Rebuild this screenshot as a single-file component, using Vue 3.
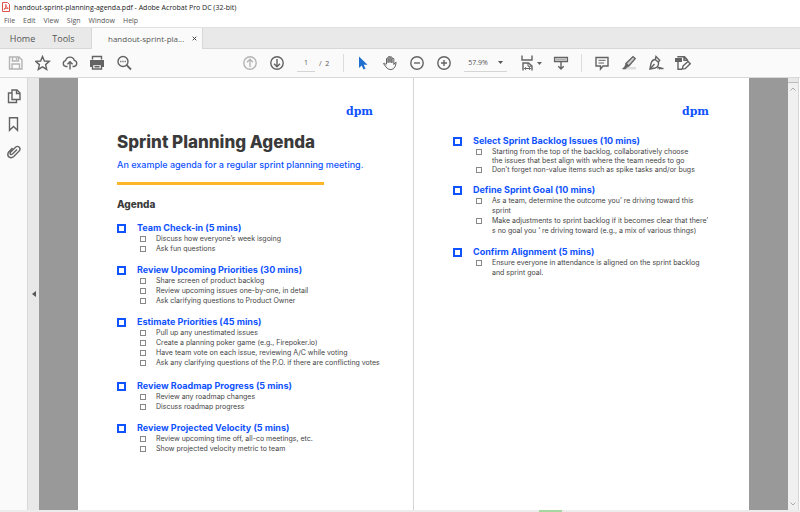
<script setup>
import { ref } from "vue";

const menus = ["File", "Edit", "View", "Sign", "Window", "Help"];

const page = ref("1");
const zoom = ref("57.9%");

const leftSections = [
  {
    title: "Team Check-in (5 mins)",
    items: [["Discuss how everyone’s week isgoing"], ["Ask fun questions"]],
  },
  {
    title: "Review Upcoming Priorities (30 mins)",
    items: [
      ["Share screen of product backlog"],
      ["Review upcoming issues one-by-one, in detail"],
      ["Ask clarifying questions to Product Owner"],
    ],
  },
  {
    title: "Estimate Priorities (45 mins)",
    items: [
      ["Pull up any unestimated issues"],
      ["Create a planning poker game (e.g., Firepoker.io)"],
      ["Have team vote on each issue, reviewing A/C while voting"],
      ["Ask any clarifying questions of the P.O. if there are conflicting votes"],
    ],
  },
  {
    title: "Review Roadmap Progress (5 mins)",
    items: [["Review any roadmap changes"], ["Discuss roadmap progress"]],
  },
  {
    title: "Review Projected Velocity (5 mins)",
    items: [["Review upcoming time off, all-co meetings, etc."], ["Show projected velocity metric to team"]],
  },
];

const rightSections = [
  {
    title: "Select Sprint Backlog Issues (10 mins)",
    tight: true,
    items: [
      ["Starting from the top of the backlog, collaboratively choose", "the issues that best align with where the team needs to go"],
      ["Don’t forget non-value items such as spike tasks and/or bugs"],
    ],
  },
  {
    title: "Define Sprint Goal (10 mins)",
    items: [
      ["As a team, determine the outcome you’ re driving toward this", "sprint"],
      ["Make adjustments to sprint backlog if it becomes clear that there’", "s no goal you ‘ re driving toward (e.g., a mix of various things)"],
    ],
  },
  {
    title: "Confirm Alignment (5 mins)",
    items: [["Ensure everyone in attendance is aligned on the sprint backlog", "and sprint goal."]],
  },
];

const pages = [
  { id: "p1", cover: true, sections: leftSections },
  { id: "p2", cover: false, sections: rightSections },
];
</script>

<template>
  <div class="app">
    <header class="titlebar">
      <svg class="app-icon" viewBox="0 0 8 10">
        <path d="M.5.5h5l2 2v7h-7z" fill="#fff" stroke="#e0524c" />
        <path d="M2 7.500C4 5.500 4 4 3.800 2.500 4 5 5 6 6.300 6.200 4.500 6 3 6.500 2 7.500z" fill="none" stroke="#d8352e" stroke-width=".8" />
      </svg>
      <span>handout-sprint-planning-agenda.pdf - Adobe Acrobat Pro DC (32-bit)</span>
    </header>

    <nav class="menubar">
      <button v-for="menu in menus" :key="menu" type="button">{{ menu }}</button>
    </nav>

    <div class="tabs">
      <button type="button" class="tab">Home</button>
      <button type="button" class="tab">Tools</button>
      <div class="tab-active">
        <span>handout-sprint-pla...</span>
        <button type="button" class="close" aria-label="Close tab">
          <svg viewBox="0 0 5 5"><path d="M.7.7l3.600 3.600M4.300.7L.7 4.300" stroke="#444" /></svg>
        </button>
      </div>
    </div>

    <div class="toolbar">
      <div class="group file-group">
        <button type="button" class="tool muted" aria-label="Save">
          <svg viewBox="0 0 16 16">
            <path d="M1.500 2h9.500l3 3v9H1.500z" />
            <path d="M4.500 2v4h6V2M4 14V9h7.500v5" />
            <path d="M8.500 3v2" />
          </svg>
        </button>
        <button type="button" class="tool" aria-label="Star">
          <svg viewBox="0 0 16 16"><path d="M7.500 1.500l1.900 4.500 4.900.4-3.700 3.200 1.100 4.800-4.200-2.600-4.200 2.600 1.100-4.800L.7 6.400l4.900-.4z" /></svg>
        </button>
        <button type="button" class="tool" aria-label="Upload">
          <svg viewBox="0 0 16 16">
            <path d="M5.500 11.500H4a3 3 0 0 1-.4-5.900 4.500 4.500 0 0 1 8.700-.2 3.100 3.100 0 0 1-.3 6.100h-1.500" />
            <path d="M8 14.500V7M5.400 9.300L8 6.700l2.600 2.600" />
          </svg>
        </button>
        <button type="button" class="tool" aria-label="Print">
          <svg viewBox="0 0 16 16">
            <path d="M3.500 4.500v-3h9v3" />
            <path d="M1 5h14v7h-2.500V9.500h-9V12H1z" fill="currentColor" stroke="none" />
            <path d="M3.500 9.500h9v4.500h-9zM5.500 11.700h5" />
          </svg>
        </button>
        <button type="button" class="tool" aria-label="Find">
          <svg viewBox="0 0 16 16">
            <circle cx="7" cy="6.500" r="5" />
            <path d="M10.700 10.200l4.300 4.300" stroke-width="1.800" />
            <path d="M4.200 6.500h1.200M6.400 6.500h1.200M8.600 6.500h1.200" />
          </svg>
        </button>
      </div>

      <div class="group page-group">
        <button type="button" class="tool muted" aria-label="Previous page">
          <svg viewBox="0 0 16 16"><circle cx="8" cy="8" r="6.200" /><path d="M8 12V4.500M5 7.300l3-3 3 3" /></svg>
        </button>
        <button type="button" class="tool" aria-label="Next page">
          <svg viewBox="0 0 16 16"><circle cx="8" cy="8" r="6.200" /><path d="M8 4v7.500M5 8.700l3 3 3-3" /></svg>
        </button>
      </div>
      <div class="page-field">
        <input v-model="page" type="text" aria-label="Page number" />
        <span>/&nbsp; 2</span>
      </div>
      <div class="divider"></div>

      <div class="group select-group">
        <button type="button" class="tool" aria-label="Select">
          <svg viewBox="0 0 16 16"><path d="M4 1.500v11.500l2.700-2.500 1.800 4 2-.9-1.800-3.800h3.800z" fill="#1f6fd0" stroke="none" /></svg>
        </button>
        <button type="button" class="tool" aria-label="Pan">
          <svg viewBox="0 0 16 16">
            <path d="M4.500 9V3.500q.8-1.300 1.600 0V8M6.100 7.500V2q.9-1.300 1.900 0v5.500M8 7.500V2.200q1-1.200 1.900 0V8M9.900 8V3.700q1-1.200 1.900 0v5.800q1.200-2.500 2.400-2-.4 4-2.700 6.200Q9 15.500 6.200 14 3.800 12.500 1.500 8.500q1-1 3 1.500" stroke-width="1" />
          </svg>
        </button>
        <button type="button" class="tool" aria-label="Zoom out">
          <svg viewBox="0 0 16 16"><circle cx="8" cy="8" r="6.200" /><path d="M5 8h6" /></svg>
        </button>
        <button type="button" class="tool" aria-label="Zoom in">
          <svg viewBox="0 0 16 16"><circle cx="8" cy="8" r="6.200" /><path d="M5 8h6M8 5v6" /></svg>
        </button>
      </div>
      <div class="zoom-field">
        <select v-model="zoom" aria-label="Zoom level">
          <option>57.9%</option>
          <option>100%</option>
        </select>
        <svg class="caret" viewBox="0 0 5 3"><path d="M0 0h5L2.500 3z" fill="currentColor" /></svg>
      </div>

      <div class="group view-group">
        <button type="button" class="tool with-caret" aria-label="Page display">
          <svg viewBox="0 0 16 16">
            <path d="M3 .5v4.500h10V.5" />
            <path d="M4 15.500V8h5.500l3.500 3v4.500" />
            <path d="M9 8v3.300h3.500M5.500 13.500h6M6.800 12.200l-1.300 1.300 1.300 1.300M10.200 12.200l1.300 1.300-1.300 1.300" stroke-width="1" />
          </svg>
          <svg class="caret" viewBox="0 0 5 3"><path d="M0 0h5L2.500 3z" fill="currentColor" /></svg>
        </button>
        <button type="button" class="tool" aria-label="Show toolbar">
          <svg viewBox="0 0 16 16">
            <path d="M1.600 2.500h12.800v4H1.600z" />
            <path d="M3.500 4.500h9" stroke-dasharray="1 1" />
            <path d="M8 6.500v7M5.300 11.200L8 13.900l2.700-2.700" />
          </svg>
        </button>
      </div>
      <div class="divider"></div>

      <div class="group">
        <button type="button" class="tool" aria-label="Comment">
          <svg viewBox="0 0 16 16">
            <path d="M2 2.500h12v8.500H9l-2.500 3v-3H2z" />
            <path d="M4.500 5.300h7M4.500 8h5.500" stroke-width="1" />
          </svg>
        </button>
        <button type="button" class="tool" aria-label="Highlight">
          <svg viewBox="0 0 16 16">
            <path d="M6 12h9v2.500H3z" fill="#dedede" stroke="none" />
            <path d="M5 8.500L12 1.600l2.200 2L7.800 11z" fill="#ccc" />
            <path d="M5 8.500L3.700 11.500 1.500 14h3l1-1.300L7.800 11z" fill="currentColor" stroke-width=".6" />
          </svg>
        </button>
        <button type="button" class="tool" aria-label="Sign">
          <svg viewBox="0 0 16 16">
            <path d="M8 1.500l3.700 3.700-1.200 1.600q.6 5-3.500 6.200l-5 1 1-5.500q1.300-4 4.300-4z" />
            <path d="M6.700 4l4 3.600M2 14l4.500-5M9.500 13.500q1.500-2.500 2 0 1.300-1.500 1.600 0h2.400" />
          </svg>
        </button>
        <button type="button" class="tool" aria-label="Edit document">
          <svg viewBox="0 0 16 16">
            <path d="M0 3h7v4H0z" fill="currentColor" stroke="none" />
            <path d="M3 2.500V1.700h6.500L12.500 5v1M3 7v7.300h4M9 2v3.300h3" />
            <path d="M8 11l5-4.500 2.200 2.200-5 5L7.300 14z" />
          </svg>
        </button>
      </div>
    </div>

    <main class="workspace">
      <aside class="rail">
        <button type="button" class="tool" aria-label="Page thumbnails">
          <svg viewBox="0 0 16 16">
            <path d="M6 2h5l3 3v6.500H6z" />
            <path d="M10.500 2v3.500H14M6 5H2.500v9.500h8v-3" />
          </svg>
        </button>
        <button type="button" class="tool" aria-label="Bookmarks">
          <svg viewBox="0 0 16 16"><path d="M3.500 1.700h8v12.600L7.500 10.500l-4 3.800z" /></svg>
        </button>
        <button type="button" class="tool" aria-label="Attachments">
          <svg viewBox="0 0 16 16">
            <path d="M11 5.500L6.500 10q-1.500 1-2.200.2T4.700 8l4.800-4.800q2-1.500 3.600-.2t.4 3.700L8 12.300q-2.500 2.300-4.800.8T2.300 8.500L6.500 4" />
          </svg>
        </button>
      </aside>
      <button type="button" class="collapse" aria-label="Show navigation pane">
        <svg viewBox="0 0 4 6"><path d="M4 0v6L0 3z" fill="#555" /></svg>
      </button>

      <div class="canvas">
        <article v-for="sheet in pages" :key="sheet.id" class="sheet">
          <div class="logo">dpm</div>
          <template v-if="sheet.cover">
            <h1>Sprint Planning Agenda</h1>
            <p class="subtitle">An example agenda for a regular sprint planning meeting.</p>
            <div class="rule"></div>
            <h2>Agenda</h2>
          </template>
          <section
            v-for="(section, s) in sheet.sections"
            :key="section.title"
            class="section"
            :class="{ tight: section.tight, long: section.items.length > 3 }"
          >
            <label class="heading">
              <input type="checkbox" />
              <span>{{ section.title }}</span>
            </label>
            <ul>
              <li v-for="(lines, i) in section.items" :key="i">
                <input :id="`${sheet.id}-${s}-${i}`" type="checkbox" />
                <label :for="`${sheet.id}-${s}-${i}`">
                  <span v-for="line in lines" :key="line" class="line">{{ line }}</span>
                </label>
              </li>
            </ul>
          </section>
        </article>
      </div>

      <div class="scrollbar">
        <div class="splitter"></div>
        <svg viewBox="0 0 6 4"><path d="M.5 3.500L3 1l2.500 2.500" fill="none" stroke="#aaa" /></svg>
        <svg class="down" viewBox="0 0 6 4"><path d="M.5.5L3 3 5.500.5" fill="none" stroke="#aaa" /></svg>
      </div>
    </main>
    <footer class="edge"><span></span></footer>
  </div>
</template>

<style>
body {
  margin: 0;
}
</style>

<style scoped>
.app {
  display: flex;
  flex-direction: column;
  height: 100vh;
  overflow: hidden;
  background: #fff;
  color: #555;
  font-family: "Open Sans", "Noto Sans", sans-serif;
}

button,
input,
select {
  margin: 0;
  padding: 0;
  border: none;
  background: transparent;
  color: inherit;
  font: inherit;
}

.titlebar {
  display: flex;
  align-items: center;
  gap: 4px;
  height: 14px;
  padding-left: 2px;
  font-size: 7px;
  color: #222;
}

.app-icon {
  width: 8px;
  height: 10px;
}

.menubar {
  display: flex;
  align-items: center;
  gap: 8px;
  height: 13px;
  padding-left: 4px;
  font-size: 7px;
}

.tabs {
  display: flex;
  height: 20px;
  background: #e9e9e9;
  border-top: 1px solid #e0e0e0;
  border-bottom: 1px solid #d8d8d8;
  font-size: 9px;
}

.tab {
  width: 41px;
}

.tab:first-child {
  margin-left: 2px;
}

.tab-active {
  display: flex;
  align-items: center;
  gap: 8px;
  margin: 0 0 -1px 7px;
  padding: 0 5px 0 16px;
  background: #fafafa;
  border-left: 1px solid #d8d8d8;
  border-right: 1px solid #d8d8d8;
  font-size: 8px;
}

.close,
.close svg {
  display: block;
  width: 5px;
  height: 5px;
}

.toolbar {
  display: flex;
  align-items: center;
  height: 28px;
  background: #fafafa;
  border-bottom: 1px solid #d9d9d9;
  font-size: 7px;
}

.group {
  display: flex;
  gap: 11px;
}

.tool {
  display: flex;
  align-items: center;
  color: #636363;
}

.tool.muted {
  color: #b4b4b4;
}

.tool svg {
  display: block;
  width: 16px;
  height: 16px;
  fill: none;
  stroke: currentColor;
  stroke-width: 1.4;
}

.tool svg.caret,
.caret {
  width: 5px;
  height: 3px;
  stroke: none;
}

.file-group {
  margin-left: 8px;
}

.page-group {
  margin-left: 110px;
}

.page-field {
  display: flex;
  align-items: center;
  gap: 4px;
  margin: 0 14px 0 12px;
}

.page-field input {
  width: 18px;
  height: 16px;
  border-bottom: 1px solid #d5d5d5;
  text-align: center;
}

.divider {
  width: 1px;
  height: 18px;
  background: #dcdcdc;
}

.select-group {
  margin-left: 11px;
}

.zoom-field {
  display: flex;
  align-items: center;
  margin: 0 12px;
  border-bottom: 1px solid #d5d5d5;
}

.zoom-field select {
  width: 34px;
  height: 16px;
  padding-left: 4px;
  appearance: none;
}

.zoom-field .caret {
  margin-right: 4px;
}

.view-group {
  margin-right: 12px;
}

.with-caret .caret {
  margin-left: 2px;
}

.divider + .group:last-child {
  margin-left: 12px;
}

.workspace {
  display: flex;
  flex: 1;
  min-height: 0;
}

.rail {
  display: flex;
  flex-direction: column;
  align-items: center;
  gap: 12px;
  width: 27px;
  padding-top: 10px;
  background: #fafafa;
}

.collapse {
  display: flex;
  align-items: center;
  justify-content: center;
  width: 12px;
  background: #e8e8e8;
  border-left: 1px solid #d8d8d8;
}

.collapse svg {
  width: 4px;
  height: 6px;
}

.canvas {
  display: flex;
  flex: 1;
  gap: 1px;
  padding: 0 39px;
  background: linear-gradient(90deg, #999 39px, #d5d5d5 39px, #d5d5d5 calc(100% - 39px), #999 calc(100% - 39px));
}

.sheet {
  flex: 1;
  min-width: 0;
  padding: 26px 0 0 39px;
  background: #fff;
  color: #444;
  font-family: Inter, "Open Sans", sans-serif;
  white-space: nowrap;
}

.logo {
  margin-right: 40px;
  color: #0f52ff;
  font: bold 11px/16px "DejaVu Serif", serif;
  text-align: right;
}

h1 {
  margin: 10px 0 0;
  color: #3a3a3a;
  font-size: 17px;
  font-weight: 800;
  line-height: 24px;
}

.subtitle {
  margin: 5px 0 0;
  color: #0f52ff;
  font-size: 9px;
  font-weight: 500;
  line-height: 12px;
}

.rule {
  width: 70%;
  height: 3px;
  margin: 11px 0 13px;
  background: #fdb52a;
}

h2 {
  margin: 0 0 12px;
  color: #3a3a3a;
  font-size: 10px;
  font-weight: 800;
  line-height: 12px;
}

.section {
  margin-bottom: 10px;
}

.section.long {
  margin-bottom: 12px;
}

.logo + .section {
  margin-top: 15px;
}

.heading {
  display: flex;
  align-items: center;
  gap: 11px;
  color: #0f52ff;
  font-size: 9px;
  font-weight: 700;
  line-height: 12px;
}

input[type="checkbox"] {
  box-sizing: border-box;
  flex: none;
  appearance: none;
}

.heading input {
  width: 9px;
  height: 9px;
  border: 2px solid #0f52ff;
}

ul {
  margin: 0;
  padding: 0 0 0 23px;
  list-style: none;
}

li {
  display: flex;
  gap: 10px;
  font-size: 7px;
  line-height: 10px;
}

.tight li {
  line-height: 9px;
}

li input {
  width: 6px;
  height: 6px;
  margin-top: 2px;
  border: 1px solid #888;
}

.line {
  display: block;
}

.scrollbar {
  display: flex;
  flex-direction: column;
  align-items: center;
  width: 10px;
  margin-right: 1px;
  background: #f0f0f0;
  border-right: 1px solid #d5d5d5;
}

.scrollbar svg {
  width: 6px;
  height: 4px;
  margin-top: 4px;
}

.scrollbar .down {
  margin: auto 0 4px;
}

.splitter {
  align-self: stretch;
  height: 4px;
  background: #e8e8e8;
  border-bottom: 1px solid #bbb;
}

.edge {
  height: 2px;
  background: #ececec;
}

.edge span {
  display: block;
  width: 23px;
  height: 2px;
  margin-left: 67.400%;
  background: #a5d8a0;
}
</style>
